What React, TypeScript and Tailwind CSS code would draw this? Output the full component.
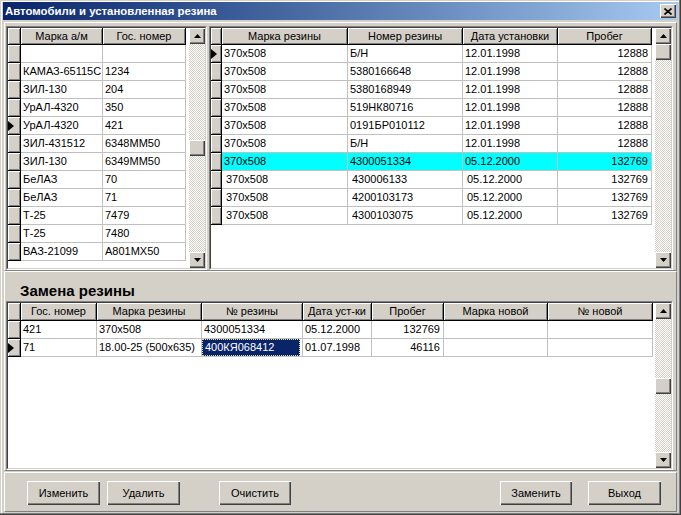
import React from 'react';

type Col = { title: string; w: string; right?: boolean };

const raised =
  'shadow-[inset_1px_1px_0_#ffffff,inset_-1px_-1px_0_#404040,inset_-2px_-2px_0_#808080]';
const fixedCell =
  'bg-[#d4d0c8] border-r border-b border-black shadow-[inset_1px_1px_0_#ffffff,inset_-1px_-1px_0_#808080]';

function ScrollArrow({ up }: { up?: boolean }) {
  return (
    <div className={`w-[16px] h-[16px] shrink-0 bg-[#d4d0c8] ${raised} flex items-center justify-center`}>
      <svg width="7" height="4" viewBox="0 0 7 4" className={up ? '' : 'rotate-180'}>
        <polygon points="3.5,0 7,4 0,4" fill="#000" />
      </svg>
    </div>
  );
}

function ScrollBar({ thumb }: { thumb: string }) {
  return (
    <div className="w-[16px] h-full shrink-0 flex flex-col bg-[repeating-conic-gradient(#d4d0c8_0%_25%,#ffffff_0%_50%)] [background-size:2px_2px]">
      <ScrollArrow up />
      <div className={`w-[16px] h-[16px] shrink-0 bg-[#d4d0c8] ${raised} ${thumb}`} />
      <div className="flex-1" />
      <ScrollArrow />
    </div>
  );
}

function RowMark() {
  return (
    <svg width="6" height="10" viewBox="0 0 6 10">
      <polygon points="0,0 6,5 0,10" fill="#000" />
    </svg>
  );
}

type GridProps = {
  cols: Col[];
  rows: string[][];
  current: number;
  ind: string;
  headerH: string;
  thumb: string;
  size: string;
  hiRow?: number;
  sel?: [number, number];
};

function Grid({ cols, rows, current, ind, headerH, thumb, size, hiRow, sel }: GridProps) {
  return (
    <div className={`shrink-0 border border-t-[#808080] border-l-[#808080] border-b-white border-r-white ${size}`}>
      <div className="h-full flex bg-white border border-t-[#404040] border-l-[#404040] border-b-[#d4d0c8] border-r-[#d4d0c8]">
        <div className="flex-1 overflow-hidden">
          <div className={`flex ${headerH}`}>
            <div className={`${ind} shrink-0 ${fixedCell}`} />
            {cols.map((c) => (
              <div key={c.title} className={`${c.w} shrink-0 ${fixedCell} text-center leading-[16px] whitespace-nowrap overflow-hidden`}>
                {c.title}
              </div>
            ))}
          </div>
          {rows.map((r, i) => {
            const hi = hiRow === i;
            const pad = hiRow !== undefined && i > hiRow ? 'px-[4px]' : 'px-[2px]';
            return (
              <div key={i} className="flex h-[18px]">
                <div className={`${ind} shrink-0 ${fixedCell} flex items-center`}>
                  {i === current && <RowMark />}
                </div>
                {r.map((v, j) => {
                  const c = cols[j];
                  const isSel = sel && sel[0] === i && sel[1] === j;
                  return (
                    <div
                      key={j}
                      className={`${c.w} shrink-0 border-r border-b border-[#c0c0c0] leading-[17px] whitespace-nowrap overflow-hidden ${
                        c.right ? 'text-right pr-[3px]' : pad
                      } ${hi ? 'bg-[#00ffff]' : ''}`}
                    >
                      {isSel ? (
                        <div className="h-full bg-[#0a246a] text-white border border-dotted border-[#e8e09a] -ml-[2px] pl-[2px] leading-[15px]">
                          {v}
                        </div>
                      ) : (
                        v
                      )}
                    </div>
                  );
                })}
              </div>
            );
          })}
        </div>
        <ScrollBar thumb={thumb} />
      </div>
    </div>
  );
}

const carCols: Col[] = [
  { title: 'Марка а/м', w: 'w-[82px]' },
  { title: 'Гос. номер', w: 'w-[83px]' },
];

const cars = [
  ['', ''],
  ['КАМАЗ-65115С', '1234'],
  ['ЗИЛ-130', '204'],
  ['УрАЛ-4320', '350'],
  ['УрАЛ-4320', '421'],
  ['ЗИЛ-431512', '6348ММ50'],
  ['ЗИЛ-130', '6349ММ50'],
  ['БеЛАЗ', '70'],
  ['БеЛАЗ', '71'],
  ['Т-25', '7479'],
  ['Т-25', '7480'],
  ['ВАЗ-21099', 'А801МХ50'],
];

const tyreCols: Col[] = [
  { title: 'Марка резины', w: 'w-[126px]' },
  { title: 'Номер резины', w: 'w-[115px]' },
  { title: 'Дата установки', w: 'w-[95px]' },
  { title: 'Пробег', w: 'w-[94px]', right: true },
];

const tyres = [
  ['370x508', 'Б/Н', '12.01.1998', '12888'],
  ['370x508', '5380166648', '12.01.1998', '12888'],
  ['370x508', '5380168949', '12.01.1998', '12888'],
  ['370x508', '519НК80716', '12.01.1998', '12888'],
  ['370x508', '0191БР010112', '12.01.1998', '12888'],
  ['370x508', 'Б/Н', '12.01.1998', '12888'],
  ['370x508', '4300051334', '05.12.2000', '132769'],
  ['370x508', '430006133', '05.12.2000', '132769'],
  ['370x508', '4200103173', '05.12.2000', '132769'],
  ['370x508', '4300103075', '05.12.2000', '132769'],
];

const swapCols: Col[] = [
  { title: 'Гос. номер', w: 'w-[76px]' },
  { title: 'Марка резины', w: 'w-[105px]' },
  { title: '№ резины', w: 'w-[101px]' },
  { title: 'Дата уст-ки', w: 'w-[69px]' },
  { title: 'Пробег', w: 'w-[72px]', right: true },
  { title: 'Марка новой', w: 'w-[104px]' },
  { title: '№ новой', w: 'w-[105px]' },
];

const swaps = [
  ['421', '370x508', '4300051334', '05.12.2000', '132769', '', ''],
  ['71', '18.00-25 (500x635)', '400КЯ068412', '01.07.1998', '46116', '', ''],
];

function Btn({ label, w, ml }: { label: string; w: string; ml: string }) {
  return (
    <button className={`${w} ${ml} h-[24px] shrink-0 bg-[#d4d0c8] ${raised} text-[11px] leading-[24px] text-center`}>
      {label}
    </button>
  );
}

export default function App() {
  return (
    <div className="w-[681px] h-[515px] overflow-hidden bg-[#d4d0c8] font-['Liberation_Sans',Arial,sans-serif] text-[11px] text-black flex flex-col px-[3px] pt-[2px] pb-[3px] shadow-[inset_-1px_-1px_0_#404040,inset_-2px_-2px_0_#808080,inset_1px_1px_0_#d4d0c8,inset_2px_2px_0_#ffffff]">
      {/* caption */}
      <div className="h-[18px] shrink-0 flex items-center justify-between pl-[2px] pr-[2px] bg-gradient-to-r from-[#0a246a] to-[#a6caf0]">
        <span className="text-white font-bold text-[11.4px] leading-[18px]">Автомобили и установленная резина</span>
        <div className={`w-[16px] h-[14px] bg-[#d4d0c8] ${raised} flex items-center justify-center`}>
          <svg width="8" height="7" viewBox="0 0 8 7">
            <path d="M0.5 0.5 L7.5 6.5 M7.5 0.5 L0.5 6.5" stroke="#000" strokeWidth="1.6" />
          </svg>
        </div>
      </div>

      {/* cars + installed tyres */}
      <div className="mt-[2px] mx-[1px] h-[249px] shrink-0 flex gap-[2px] pl-[1px] pr-[3px] pt-[3px] border border-t-white border-l-white border-b-[#808080] border-r-[#808080]">
        <Grid cols={carCols} rows={cars} current={4} ind="w-[13px]" headerH="h-[17px]" thumb="mt-[96px]" size="w-[201px] h-[244px]" />
        <Grid cols={tyreCols} rows={tyres} current={0} ind="w-[11px]" headerH="h-[17px]" thumb="mt-0" size="w-[464px] h-[244px]" hiRow={6} />
      </div>

      {/* tyre swap */}
      <div className="mx-[1px] h-[200px] shrink-0 flex flex-col pl-[1px] pr-[3px] pt-[10px] border border-t-white border-l-white border-b-[#808080] border-r-[#808080]">
        <div className="h-[17px] pl-[14px] text-[15px] font-bold leading-[17px]">Замена резины</div>
        <div className="mt-[2px]">
          <Grid cols={swapCols} rows={swaps} current={1} ind="w-[13px]" headerH="h-[18px]" thumb="mt-[59px]" size="w-[667px] h-[169px]" sel={[1, 2]} />
        </div>
      </div>

      {/* buttons */}
      <div className="mt-[1px] mx-[1px] h-[40px] shrink-0 flex pl-[22px] pt-[8px] border border-t-white border-l-white border-b-[#808080] border-r-[#808080]">
        <Btn label="Изменить" w="w-[73px]" ml="ml-0" />
        <Btn label="Удалить" w="w-[73px]" ml="ml-[7px]" />
        <Btn label="Очистить" w="w-[72px]" ml="ml-[39px]" />
        <Btn label="Заменить" w="w-[72px]" ml="ml-[209px]" />
        <Btn label="Выход" w="w-[73px]" ml="ml-[16px]" />
      </div>
    </div>
  );
}
